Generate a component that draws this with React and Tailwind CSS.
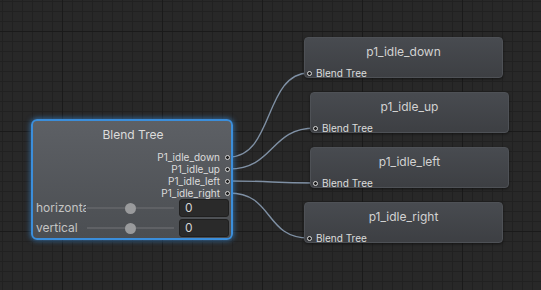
const outputs = ["P1_idle_down", "P1_idle_up", "P1_idle_left", "P1_idle_right"];

const states = [
  { name: "p1_idle_down", x: 304, y: 37 },
  { name: "p1_idle_up", x: 310, y: 92 },
  { name: "p1_idle_left", x: 310, y: 147 },
  { name: "p1_idle_right", x: 304, y: 202 },
];

function curve(x1, y1, x2, y2) {
  const t = 45;
  return `M${x1} ${y1} C${x1 + t} ${y1} ${x2 - t} ${y2} ${x2} ${y2}`;
}

function Canvas() {
  return (
    <svg className="absolute inset-0" width="541" height="290">
      <defs>
        <pattern id="minor" x="2" y="1" width="10" height="10" patternUnits="userSpaceOnUse">
          <path d="M0.5 0V10M0 0.5H10" stroke="#212121" strokeWidth="1" />
        </pattern>
        <pattern id="major" x="62" y="31" width="100" height="100" patternUnits="userSpaceOnUse">
          <path d="M0.5 0V100M0 0.5H100" stroke="#1a1a1a" strokeWidth="1" />
        </pattern>
      </defs>
      <rect width="541" height="290" fill="#282828" />
      <rect width="541" height="290" fill="url(#minor)" />
      <rect width="541" height="290" fill="url(#major)" />
      <g fill="none" stroke="#7f90a4" strokeWidth="1.4">
        <path d={curve(229, 157, 309, 73)} />
        <path d={curve(229, 169, 315, 128)} />
        <path d={curve(229, 181, 315, 183)} />
        <path d={curve(229, 193, 309, 238)} />
      </g>
    </svg>
  );
}

function Dot() {
  return <span className="block h-[5px] w-[5px] shrink-0 rounded-full border border-[#d8d8d8] bg-[#1e1e1e]" />;
}

// label is cut off by the field width, as in the editor
function Slider({ label }) {
  return (
    <div className="flex h-[18px] items-center">
      <span className="w-[50px] overflow-hidden whitespace-nowrap text-[12px] text-[#c4c4c4]">{label}</span>
      <div className="relative ml-[1px] flex h-[10px] w-[87px] items-center">
        <div className="h-[2px] w-full bg-[#5f6165]" />
        <div className="absolute left-[38px] h-[11px] w-[11px] rounded-full bg-[#999a9c]" />
      </div>
      <div className="ml-[5px] flex h-[18px] w-[50px] items-center rounded-[3px] border border-[#1f1f1f] bg-[#2a2a2a] px-[5px] text-[12px] text-[#d2d2d2]">
        0
      </div>
    </div>
  );
}

function BlendTree() {
  return (
    <div className="absolute left-[31px] top-[119px] h-[121px] w-[202px] rounded-[6px] border-2 border-[#3b8edb] bg-gradient-to-b from-[#5d6065] to-[#4b4e52] shadow-[0_0_5px_1px_rgba(58,138,214,0.6)]">
      <div className="flex h-full flex-col pl-[3px] pr-[1px] pt-[6px]">
        <div className="h-[16px] text-center text-[12px] leading-[16px] text-[#dcdcdc]">Blend Tree</div>
        <div className="mt-[8px] flex flex-col items-end">
          {outputs.map((o) => (
            <div key={o} className="flex h-[12px] items-center gap-[5px] text-[10px] leading-[12px] text-[#dcdcdc]">
              <span>{o}</span>
              <Dot />
            </div>
          ))}
        </div>
        <div className="flex flex-col gap-[2px]">
          <Slider label="horizontal" />
          <Slider label="vertical" />
        </div>
      </div>
    </div>
  );
}

function StateNode({ name, x, y }) {
  return (
    <div
      className="absolute flex h-[41px] w-[199px] flex-col rounded-[4px] border border-[#4e5156] bg-gradient-to-b from-[#484b50] to-[#3d3f43] shadow-[0_1px_3px_rgba(0,0,0,0.5)]"
      style={{ left: x, top: y }}
    >
      <div className="mt-[6px] h-[16px] text-center text-[12px] leading-[16px] text-[#d2d2d2]">{name}</div>
      <div className="mt-[8px] flex h-[10px] items-center gap-[4px] pl-[2px] text-[10px] leading-[10px] text-[#dcdcdc]">
        <Dot />
        <span>Blend Tree</span>
      </div>
    </div>
  );
}

export default function App() {
  return (
    <div className="relative h-[290px] w-[541px] overflow-hidden bg-[#282828] font-['Inter','Roboto',sans-serif]">
      <Canvas />
      <BlendTree />
      {states.map((s) => (
        <StateNode key={s.name} {...s} />
      ))}
    </div>
  );
}
